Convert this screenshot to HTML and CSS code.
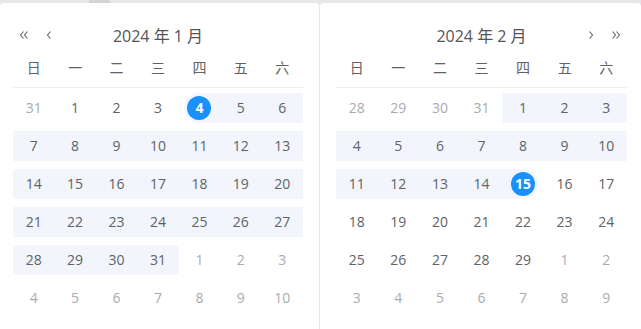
FILE: index.html
```html
<!DOCTYPE html>
<html lang="zh-CN">
<head>
    <meta charset="UTF-8">
    <meta name="viewport" content="width=device-width, initial-scale=1.0">
    <title>日期范围</title>
    <link rel="stylesheet" href="styles.css">
</head>
<body>
    <div class="strip"><span class="thumb"></span></div>

    <div class="picker">
        <div class="panel left">
            <div class="head">
                <div class="nav">
                    <button class="arrow" title="上一年">
                        <svg width="10" height="10" viewBox="0 0 10 10"><path d="M4.5 1.5 1.5 5l3 3.5M8.5 1.5 5.5 5l3 3.5" fill="none" stroke="currentColor" stroke-width="1.1"/></svg>
                    </button>
                    <button class="arrow" title="上个月">
                        <svg width="10" height="10" viewBox="0 0 10 10"><path d="M6.5 1.5 3.5 5l3 3.5" fill="none" stroke="currentColor" stroke-width="1.1"/></svg>
                    </button>
                </div>
                <div class="title">2024 年 1 月</div>
                <div class="nav"></div>
            </div>
            <div class="week">
                <span>日</span><span>一</span><span>二</span><span>三</span><span>四</span><span>五</span><span>六</span>
            </div>
            <div class="days" id="jan"></div>
        </div>

        <div class="panel right">
            <div class="head">
                <div class="nav"></div>
                <div class="title">2024 年 2 月</div>
                <div class="nav end">
                    <button class="arrow" title="下个月">
                        <svg width="10" height="10" viewBox="0 0 10 10"><path d="M3.5 1.5 6.5 5l-3 3.5" fill="none" stroke="currentColor" stroke-width="1.1"/></svg>
                    </button>
                    <button class="arrow" title="下一年">
                        <svg width="10" height="10" viewBox="0 0 10 10"><path d="M1.5 1.5 4.5 5l-3 3.5M5.5 1.5 8.5 5l-3 3.5" fill="none" stroke="currentColor" stroke-width="1.1"/></svg>
                    </button>
                </div>
            </div>
            <div class="week">
                <span>日</span><span>一</span><span>二</span><span>三</span><span>四</span><span>五</span><span>六</span>
            </div>
            <div class="days" id="feb"></div>
        </div>
    </div>

    <script>
        // offset = weekday of the 1st, 42 cells per month
        function buildMonth(el, offset, total, prevTotal, inRange, startDay, endDay) {
            for (let i = 0; i < 42; i++) {
                const cell = document.createElement('div');
                let day = i - offset + 1;
                let cls = 'cell';
                if (day < 1) {
                    day += prevTotal;
                    cls += ' muted';
                } else if (day > total) {
                    day -= total;
                    cls += ' muted';
                } else {
                    if (inRange(day)) cls += ' range';
                    if (day === startDay) cls += ' start';
                    if (day === endDay) cls += ' end';
                }
                cell.className = cls;
                cell.innerHTML = `<div class="in"><span class="num">${day}</span></div>`;
                el.appendChild(cell);
            }
        }

        buildMonth(document.getElementById('jan'), 1, 31, 31, d => d >= 4, 4, null);
        buildMonth(document.getElementById('feb'), 4, 29, 31, d => d <= 15, null, 15);
    </script>
</body>
</html>
```

FILE: styles.css
```css
html, body {
    margin: 0;
    height: 100%;
}
body {
    display: flex;
    flex-direction: column;
    overflow: hidden;
    background: #e7e7eb;
    font-family: "Open Sans", "Noto Sans CJK SC", sans-serif;
    color: #606266;
}
.strip {
    height: 3px;
    flex: none;
}
.thumb {
    display: block;
    width: 21px;
    height: 3px;
    margin-left: 89px;
    background: #d4d4d8;
}
.picker {
    flex: 1;
    display: flex;
    gap: 1px;
}
.panel {
    background: #fff;
    border-radius: 4px 4px 0 0;
    padding-top: 16px;
}
.panel.left {
    width: 319px;
    padding-left: 13px;
    padding-right: 16px;
    box-sizing: border-box;
}
.panel.right {
    flex: 1;
    padding-left: 16px;
    padding-right: 14px;
}
.head {
    display: grid;
    grid-template-columns: 1fr auto 1fr;
    align-items: center;
    height: 31px;
}
.nav {
    display: flex;
    gap: 15px;
    padding-left: 6px;
}
.nav.end {
    justify-content: flex-end;
    padding-left: 0;
    padding-right: 6px;
}
.arrow {
    border: none;
    background: none;
    padding: 0;
    width: 10px;
    height: 10px;
    color: #606266;
    cursor: pointer;
    display: flex;
}
.title {
    font-size: 16px;
    color: #555;
}
.week {
    display: grid;
    grid-template-columns: repeat(7, 1fr);
    height: 35px;
    line-height: 35px;
    padding-bottom: 2px;
    border-bottom: 1px solid #ebeef5;
    text-align: center;
    font-size: 14px;
}
.days {
    display: grid;
    grid-template-columns: repeat(7, 1fr);
    padding-top: 1px;
}
.cell {
    padding: 4px 0;
    font-size: 14px;
}
.cell .in {
    height: 30px;
    display: flex;
    align-items: center;
    justify-content: center;
}
.cell.muted {
    color: #a8abb2;
}
.cell.range .in {
    background: #f2f6fc;
}
.cell.start .in {
    background: linear-gradient(to right, transparent 50%, #f2f6fc 50%);
}
.cell.end .in {
    background: linear-gradient(to right, #f2f6fc 50%, transparent 50%);
}
.num {
    width: 24px;
    height: 24px;
    line-height: 24px;
    text-align: center;
    border-radius: 50%;
}
.cell.start .num,
.cell.end .num {
    background: #1890ff;
    color: #fff;
    font-weight: 700;
    box-shadow: 0 0 0 3px #f2f6fc;
}
```
